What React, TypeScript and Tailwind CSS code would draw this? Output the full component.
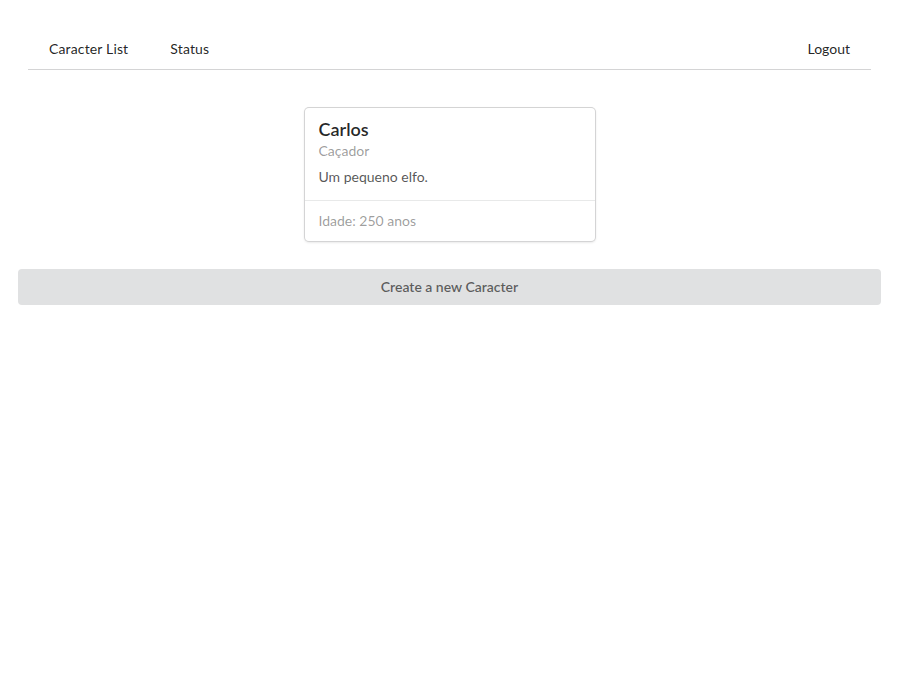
const characters = [
  { name: "Carlos", role: "Caçador", description: "Um pequeno elfo.", age: 250 },
];

export default function App() {
  return (
    <div className="min-h-screen bg-white px-[18px] pt-[30px] font-['Lato','Liberation_Sans',sans-serif] text-[14px] text-[rgba(0,0,0,0.87)]">
      {/* ========== MENU ========== */}
      <nav className="mx-[10px] flex items-stretch border-b border-[#d4d4d5] pb-px">
        <a className="mx-[5px] px-4 py-3 leading-[14px] tracking-[0.15px] text-[rgba(0,0,0,0.87)]">Caracter List</a>
        <a className="mx-[5px] px-4 py-3 leading-[14px] tracking-[0.15px] text-[rgba(0,0,0,0.87)]">Status</a>
        <div className="ml-auto flex">
          <a className="mx-[5px] px-4 py-3 leading-[14px] text-[rgba(0,0,0,0.87)]">Logout</a>
        </div>
      </nav>

      {/* ========== CARDS ========== */}
      <div className="mt-[38px] flex justify-center">
        {characters.map(c => (
          <div
            key={c.name}
            className="w-[290px] rounded-[4px] bg-white shadow-[0_1px_3px_0_#d4d4d5,0_0_0_1px_#d4d4d5]"
          >
            <div className="px-[14px] pt-[10px] pb-[13px]">
              <div className="text-[18px] font-semibold leading-[22px] text-[rgba(0,0,0,0.85)]">{c.name}</div>
              <div className="mt-[1px] leading-[20px] text-[rgba(0,0,0,0.4)]">{c.role}</div>
              <div className="mt-[6px] leading-[20px] text-[rgba(0,0,0,0.68)]">{c.description}</div>
            </div>
            <div className="border-t border-[rgba(34,36,38,0.1)] px-[14px] py-[10px] leading-[20px] text-[rgba(0,0,0,0.4)]">
              Idade: {c.age} anos
            </div>
          </div>
        ))}
      </div>

      <button className="mt-[28px] block h-[36px] w-full rounded-[4px] bg-[#e0e1e2] pb-[2px] font-semibold text-[rgba(0,0,0,0.6)]">
        Create a new Caracter
      </button>
    </div>
  );
}
